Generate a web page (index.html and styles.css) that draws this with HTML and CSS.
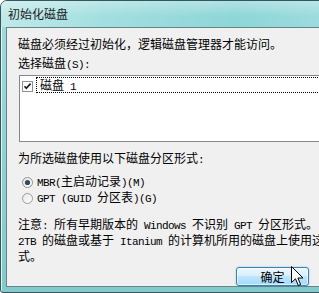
FILE: index.html
```html
<!DOCTYPE html>
<html lang="zh-CN">
<head>
<meta charset="utf-8">
<title>初始化磁盘</title>
<link rel="stylesheet" href="styles.css">
</head>
<body>
<div class="window">
  <div class="titlebar"><span class="title">初始化磁盘</span></div>
  <div class="client">
    <p class="line intro">磁盘必须经过初始化，逻辑磁盘管理器才能访问。</p>
    <p class="line label">选择磁盘<span class="en">(S):</span></p>
    <div class="listbox">
      <div class="item">
        <svg class="check" width="11" height="11" viewBox="0 0 11 11">
          <rect x="0.5" y="0.5" width="10" height="10" fill="#fff" stroke="#8e8f8f"/>
          <path d="M2.5 5.2 L4.3 7.3 L8.6 2.6" fill="none" stroke="#1c1c1c" stroke-width="1.7"/>
        </svg>
        <span class="item-text">磁盘<span class="en"> 1</span></span>
      </div>
    </div>
    <p class="line group-label">为所选磁盘使用以下磁盘分区形式<span class="en">:</span></p>
    <div class="radio">
      <svg class="radio-dot" width="11" height="11" viewBox="0 0 11 11">
        <defs>
          <linearGradient id="rg" x1="0" y1="0" x2="1" y2="1">
            <stop offset="0" stop-color="#e6e6e6"/>
            <stop offset="1" stop-color="#ffffff"/>
          </linearGradient>
        </defs>
        <circle cx="5.5" cy="5.5" r="5" fill="url(#rg)" stroke="#8e8f8f"/>
        <circle cx="5.5" cy="5.5" r="2.6" fill="#2f4a5e"/>
      </svg>
      <span class="radio-text"><span class="en">MBR(</span>主启动记录<span class="en">)(M)</span></span>
    </div>
    <div class="radio">
      <svg class="radio-dot" width="11" height="11" viewBox="0 0 11 11">
        <circle cx="5.5" cy="5.5" r="5" fill="url(#rg)" stroke="#9a9b9b"/>
      </svg>
      <span class="radio-text"><span class="en">GPT (GUID </span>分区表<span class="en">)(G)</span></span>
    </div>
    <p class="note">注意<span class="en">: </span>所有早期版本的<span class="en"> Windows </span>不识别<span class="en"> GPT </span>分区形式。<br><span class="en">2TB </span>的磁盘或基于<span class="en"> Itanium </span>的计算机所用的磁盘上使用这<br>式。</p>
    <div class="buttons">
      <button class="btn btn-default">确定</button>
    </div>
  </div>
</div>
<svg class="cursor" width="13" height="21" viewBox="0 0 13 21">
  <path d="M0.5 0.5 L0.5 16.5 L4.5 12.8 L7.3 19.5 L9.6 18.5 L6.9 12 L12 12 Z" fill="#fff" stroke="#000" stroke-linejoin="miter"/>
</svg>
</body>
</html>
```

FILE: styles.css
```css
* {
  box-sizing: border-box;
}

html,
body {
  margin: 0;
  padding: 0;
  width: 319px;
  height: 293px;
  overflow: hidden;
  background: #ffffff;
}

body {
  position: relative;
  font-family: "Noto Sans CJK SC", "Noto Sans", sans-serif;
  font-size: 12px;
  color: #000000;
}

.en {
  font-family: "Liberation Mono", "DejaVu Sans Mono", monospace;
  font-size: 11px;
  letter-spacing: -0.6px;
}

.window {
  width: 430px;
  height: 293px;
  display: flex;
  flex-direction: column;
  padding: 0 5px 8px 5px;
  border: 1px solid #34575b;
  border-radius: 7px 7px 3px 3px;
  background: linear-gradient(to bottom, #a2dbdc 0%, #8dd0d1 60%, #84cacb 100%);
  box-shadow: inset 1px 1px 0 rgba(255, 255, 255, 0.75), inset -1px 0 0 rgba(255, 255, 255, 0.4);
}

.titlebar {
  height: 26px;
  flex: none;
  display: flex;
  align-items: center;
  margin: 0 -5px;
  padding-left: 7px;
  border-radius: 6px 6px 0 0;
  background:
    linear-gradient(to bottom, rgba(255, 255, 255, 0.3), rgba(255, 255, 255, 0) 60%),
    linear-gradient(to right, #c0e9ea 0%, #a2dedf 25%, #8ed6d8 55%, #a0dddf 80%, #8fd4d6 100%);
}

.title {
  font-size: 12px;
  line-height: 14px;
  color: #1b1b1b;
}

.client {
  flex: 1;
  display: flex;
  flex-direction: column;
  padding: 9px 0 0 11px;
  border: 1px solid #648486;
  background: #f0f0f0;
}

.line {
  margin: 0;
  line-height: 13px;
  white-space: nowrap;
}

.label {
  margin-top: 6px;
}

.listbox {
  margin: 3px 0 0 1px;
  width: 400px;
  height: 67px;
  padding: 1px 0 0 2px;
  border: 1px solid #828790;
  background: #ffffff;
}

.item {
  display: flex;
  align-items: flex-start;
  gap: 3px;
  height: 16px;
}

.check {
  display: block;
  flex: none;
  margin-top: 4px;
}

.item-text {
  flex: 1;
  height: 16px;
  padding-left: 3px;
  line-height: 14px;
  border: 1px dotted #000000;
  white-space: nowrap;
}

.group-label {
  margin-top: 9px;
}

.radio {
  display: flex;
  align-items: center;
  gap: 4px;
  height: 16px;
  padding-left: 4px;
  white-space: nowrap;
}

.group-label + .radio {
  margin-top: 7px;
}

.radio-dot {
  display: block;
  flex: none;
}

.radio-text {
  line-height: 16px;
}

.note {
  margin: 11px 0 0;
  line-height: 13px;
  white-space: nowrap;
}

.buttons {
  display: flex;
  gap: 9px;
  margin-top: 5px;
  padding-left: 218px;
}

.btn {
  width: 73px;
  height: 19px;
  padding: 0;
  font-family: "Noto Sans CJK SC", sans-serif;
  font-size: 12px;
  line-height: 15px;
  color: #000000;
  border-radius: 3px;
}

.btn-default {
  border: 1px solid #3c7fb1;
  background: linear-gradient(to bottom, #eaf6fd 0%, #d9f0fc 45%, #bee6fd 50%, #a7d9f5 100%);
  box-shadow: inset 0 0 0 1px rgba(255, 255, 255, 0.6), 0 0 2px rgba(60, 160, 220, 0.5);
}

.cursor {
  position: absolute;
  left: 291px;
  top: 266px;
}
```
